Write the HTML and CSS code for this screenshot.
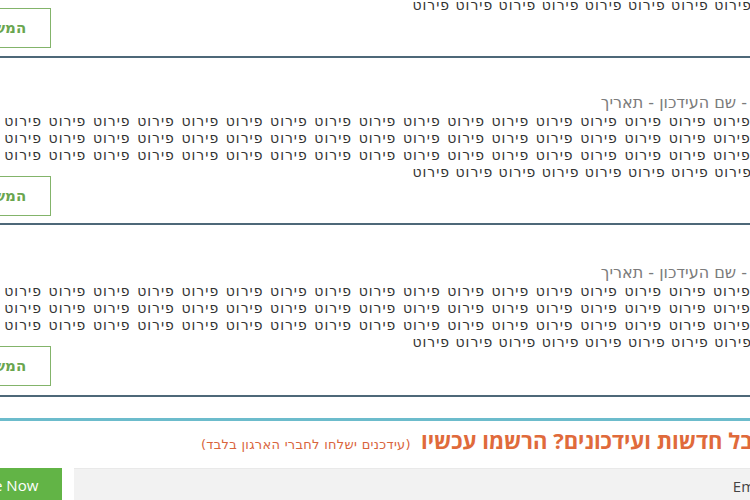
FILE: index.html
```html
<!DOCTYPE html>
<html lang="he" dir="rtl">
<head>
<meta charset="utf-8">
<link rel="stylesheet" href="styles.css">
</head>
<body>
<div class="feed">
  <div class="item item-first">
    <p class="item-text">פירוט פירוט פירוט פירוט פירוט פירוט פירוט פירוט פירוט</p>
    <a class="more">המשך</a>
  </div>
  <div class="item item-second">
    <h3 class="item-title">כותרת - שם העידכון - תאריך</h3>
    <p class="item-text">פירוט פירוט פירוט פירוט פירוט פירוט פירוט פירוט פירוט פירוט פירוט פירוט פירוט פירוט פירוט פירוט פירוט פירוט פירוט פירוט פירוט פירוט פירוט פירוט פירוט פירוט פירוט פירוט פירוט פירוט פירוט פירוט פירוט פירוט פירוט פירוט פירוט פירוט פירוט פירוט פירוט פירוט פירוט פירוט פירוט פירוט פירוט פירוט פירוט פירוט פירוט פירוט פירוט פירוט פירוט פירוט פירוט פירוט פירוט פירוט פירוט פירוט פירוט פירוט פירוט פירוט</p>
    <a class="more">המשך</a>
  </div>
  <div class="item item-third">
    <h3 class="item-title">כותרת - שם העידכון - תאריך</h3>
    <p class="item-text">פירוט פירוט פירוט פירוט פירוט פירוט פירוט פירוט פירוט פירוט פירוט פירוט פירוט פירוט פירוט פירוט פירוט פירוט פירוט פירוט פירוט פירוט פירוט פירוט פירוט פירוט פירוט פירוט פירוט פירוט פירוט פירוט פירוט פירוט פירוט פירוט פירוט פירוט פירוט פירוט פירוט פירוט פירוט פירוט פירוט פירוט פירוט פירוט פירוט פירוט פירוט פירוט פירוט פירוט פירוט פירוט פירוט פירוט פירוט פירוט פירוט פירוט פירוט פירוט פירוט פירוט</p>
    <a class="more">המשך</a>
  </div>
</div>
<div class="signup">
  <div class="signup-head">
    <h2 class="signup-title">לקבל חדשות ועידכונים? הרשמו עכשיו</h2>
    <span class="signup-note">(עידכנים ישלחו לחברי הארגון בלבד)</span>
  </div>
  <form class="signup-form">
    <input class="signup-input" type="text" placeholder="Email">
    <button class="signup-btn" type="button">Subscribe Now</button>
  </form>
</div>
</body>
</html>
```
FILE: styles.css
```css
html, body {
  margin: 0;
  padding: 0;
  width: 750px;
  height: 500px;
  overflow: hidden;
  background: #ffffff;
}
body {
  font-family: "DejaVu Sans", "Liberation Sans", sans-serif;
  color: #333333;
}
.feed {
  width: 835px;
  margin-right: -45px;
  margin-top: -3px;
}
.item {
  display: flex;
  flex-direction: column;
  padding: 35px 0 8px;
  border-bottom: 2px solid #4d6878;
}
.item-first {
  padding-top: 0;
}
.item-third {
  padding-top: 38px;
  padding-bottom: 9px;
}
.item-title {
  margin: 0;
  font-family: "DejaVu Sans", "Liberation Sans", sans-serif;
  font-weight: 400;
  font-size: 16px;
  line-height: 20px;
  color: #7b7b7b;
}
.item-text {
  margin: 0;
  font-size: 14px;
  letter-spacing: 1px;
  line-height: 17px;
  text-align: justify;
  color: #333333;
}
.more {
  align-self: flex-end;
  box-sizing: border-box;
  height: 40px;
  margin-top: -6px;
  padding: 0 24px;
  border: 1px solid #83b46a;
  color: #6aa64f;
  font-weight: 700;
  font-size: 15px;
  line-height: 38px;
  background: #ffffff;
}
.item-second .more {
  margin-top: -5px;
}
.item-second {
  padding-bottom: 7px;
}
.item-third .more {
  margin-top: -5px;
}
.signup {
  width: 870px;
  margin-right: -30px;
  margin-top: 21px;
  border-top: 3px solid #6cbccc;
  padding-top: 7px;
}
.signup-head {
  display: flex;
  align-items: baseline;
  gap: 10px;
  margin-right: 1px;
}
.signup-title {
  margin: 0;
  font-family: "Open Sans", "Liberation Sans", sans-serif;
  font-weight: 700;
  font-size: 22px;
  line-height: 24px;
  color: #e06a3b;
}
.signup-note {
  font-family: "DejaVu Sans", "Liberation Sans", sans-serif;
  font-size: 13px;
  letter-spacing: 0.3px;
  color: #d9643c;
}
.signup-form {
  display: flex;
  gap: 12px;
  margin: 16px 0 0;
}
.signup-input {
  flex: 1;
  height: 34px;
  box-sizing: border-box;
  border: 0;
  border-top: 1px solid #e9e9e9;
  background: #f2f2f2;
  padding: 0 9px;
  font-family: "Open Sans", "Liberation Sans", sans-serif;
  font-size: 15px;
  color: #333333;
}
.signup-input::placeholder {
  color: #444444;
}
.signup-btn {
  height: 34px;
  border: 0;
  padding: 0 24px;
  background: #62b446;
  color: #ffffff;
  font-family: "Open Sans", "Liberation Sans", sans-serif;
  font-size: 15px;
}
```
